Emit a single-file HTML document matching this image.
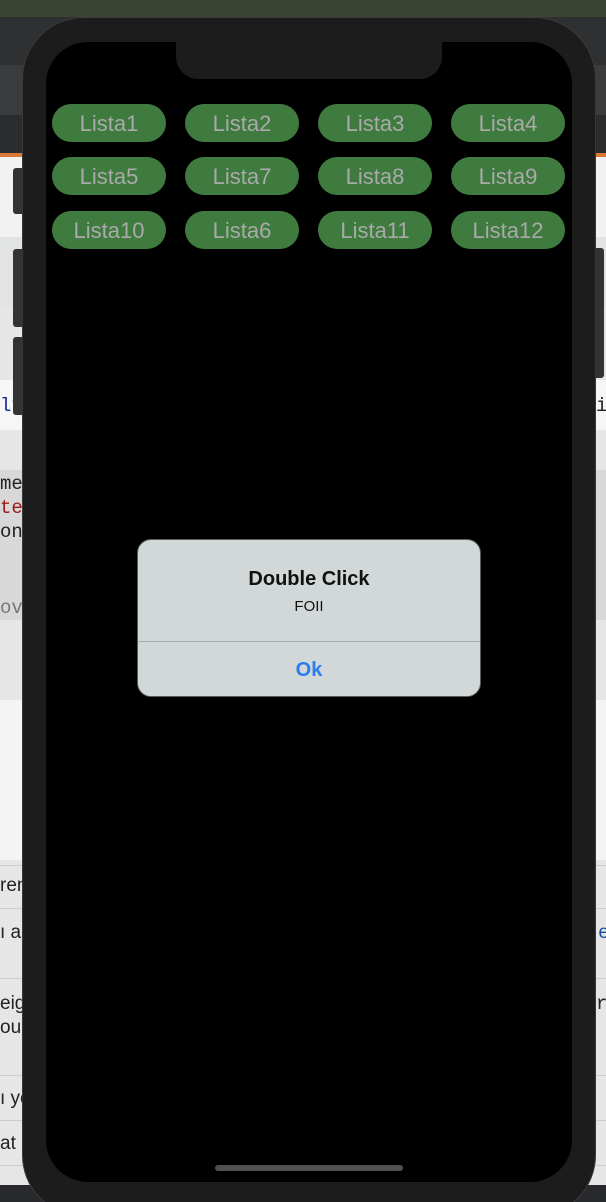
<!DOCTYPE html>
<html style="overflow:hidden"><head><style>
*{margin:0;padding:0;box-sizing:border-box}
html,body{width:606px;height:1202px;overflow:hidden}
body{position:relative;background:#e6e6e6;font-family:"Liberation Sans",sans-serif}
#w{position:absolute;left:0;top:0;width:606px;height:1202px;overflow:hidden}
.a{position:absolute}
.t{position:absolute;font-family:"Liberation Mono",monospace;font-size:19px;color:#222;white-space:nowrap}
.btn{position:absolute;width:114px;height:38px;border-radius:19px;background:#3f7a3f;color:#a9aaa9;font-size:22px;text-align:center;line-height:40px}
</style></head><body><div id="w">
<div class="a" style="left:0;top:0;width:606px;height:17px;background:#3c4434"></div>
<div class="a" style="left:0;top:17px;width:606px;height:48px;background:#2f3031"></div>
<div class="a" style="left:0;top:65px;width:606px;height:50px;background:#3a3b3c"></div>
<div class="a" style="left:0;top:115px;width:606px;height:38px;background:#2b2c2d"></div>
<div class="a" style="left:0;top:153px;width:606px;height:4px;background:#d87a35"></div>
<div class="a" style="left:0;top:157px;width:606px;height:80px;background:#f2f2f2"></div>
<div class="a" style="left:0;top:237px;width:606px;height:70px;background:#e2e3e3"></div>
<div class="a" style="left:0;top:380px;width:606px;height:50px;background:#f6f6f6"></div>
<div class="a" style="left:0;top:470px;width:606px;height:150px;background:#d8d8d8"></div>
<div class="a" style="left:0;top:700px;width:606px;height:160px;background:#f4f4f4"></div>
<div class="a" style="left:0;top:1185px;width:606px;height:17px;background:#27292c"></div>
<div class="t" style="left:0;top:395px;color:#1a2a8a">lf</div>
<div class="t" style="left:0;top:473px">me</div>
<div class="t" style="left:0;top:497px;color:#9a1a1a">te</div>
<div class="t" style="left:0;top:521px">on</div>
<div class="t" style="left:0;top:597px;color:#777">ov</div>
<div class="t" style="left:0;top:875px;font-family:'Liberation Sans';">ren</div>
<div class="t" style="left:0;top:922px;font-family:'Liberation Sans';">ı a</div>
<div class="t" style="left:0;top:993px;font-family:'Liberation Sans';">eig</div>
<div class="t" style="left:0;top:1017px;font-family:'Liberation Sans';">ou</div>
<div class="t" style="left:0;top:1088px;font-family:'Liberation Sans';">ı yo</div>
<div class="t" style="left:0;top:1133px;font-family:'Liberation Sans';">at -</div>
<div class="t" style="left:596px;top:395px">i</div>
<div class="t" style="left:598px;top:922px;color:#1a4fa0">e</div>
<div class="t" style="left:596px;top:993px">r</div>
<div class="a" style="left:0;top:865px;width:606px;height:1px;background:#ccc"></div>
<div class="a" style="left:0;top:908px;width:606px;height:1px;background:#ccc"></div>
<div class="a" style="left:0;top:978px;width:606px;height:1px;background:#ccc"></div>
<div class="a" style="left:0;top:1075px;width:606px;height:1px;background:#ccc"></div>
<div class="a" style="left:0;top:1120px;width:606px;height:1px;background:#ccc"></div>
<div class="a" style="left:0;top:1165px;width:606px;height:1px;background:#ccc"></div>
<div class="a" style="left:13px;top:168px;width:14px;height:46px;border-radius:3px;background:#333"></div>
<div class="a" style="left:13px;top:249px;width:14px;height:78px;border-radius:3px;background:#333"></div>
<div class="a" style="left:13px;top:337px;width:14px;height:78px;border-radius:3px;background:#333"></div>
<div class="a" style="left:590px;top:248px;width:14px;height:130px;border-radius:3px;background:#333"></div>
<div class="a" style="left:22px;top:17px;width:574px;height:1200px;border-radius:62px;background:#1c1c1c;border:1px solid #3a3a3a"></div>
<div class="a" style="left:46px;top:42px;width:526px;height:1140px;border-radius:42px;background:#000"></div>
<div class="a" style="left:176px;top:38px;width:266px;height:41px;border-radius:0 0 22px 22px;background:#1c1c1c"></div>
<div class="a" style="left:215px;top:1165px;width:188px;height:6px;border-radius:3px;background:#505050"></div>
<div class="btn" style="left:52px;top:104px">Lista1</div>
<div class="btn" style="left:185px;top:104px">Lista2</div>
<div class="btn" style="left:318px;top:104px">Lista3</div>
<div class="btn" style="left:451px;top:104px">Lista4</div>
<div class="btn" style="left:52px;top:157px">Lista5</div>
<div class="btn" style="left:185px;top:157px">Lista7</div>
<div class="btn" style="left:318px;top:157px">Lista8</div>
<div class="btn" style="left:451px;top:157px">Lista9</div>
<div class="btn" style="left:52px;top:211px">Lista10</div>
<div class="btn" style="left:185px;top:211px">Lista6</div>
<div class="btn" style="left:318px;top:211px">Lista11</div>
<div class="btn" style="left:451px;top:211px">Lista12</div>
<div class="a" style="left:137px;top:539px;width:344px;height:158px;border-radius:14px;background:#d2d8d8;border:1px solid #5a5e5e;overflow:hidden">
<div class="a" style="left:0;top:28px;width:342px;text-align:center;font-weight:bold;font-size:20px;color:#111">Double Click</div>
<div class="a" style="left:0;top:58px;width:342px;text-align:center;font-size:15px;color:#111">FOII</div>
<div class="a" style="left:0;top:101px;width:342px;height:1px;background:#aab0b0"></div>
<div class="a" style="left:0;top:119px;width:342px;text-align:center;font-weight:bold;font-size:20px;color:#2b7cf0">Ok</div>
</div>
</div></body></html>
